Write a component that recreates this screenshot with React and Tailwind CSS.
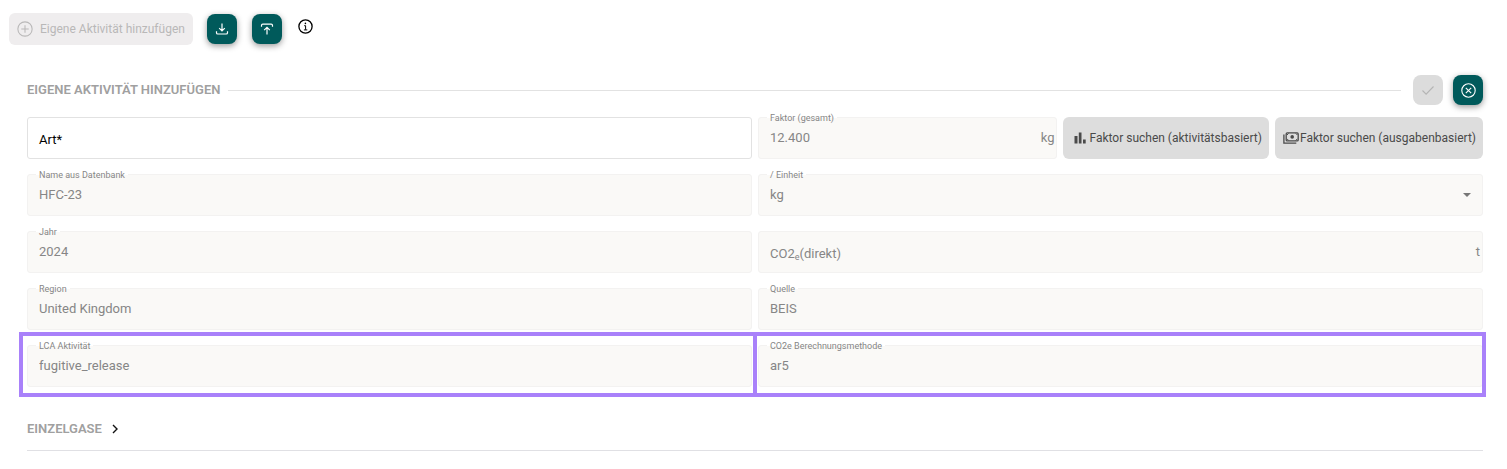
import React, { useState } from "react";

const iconButton =
  "flex h-[30px] w-[30px] shrink-0 items-center justify-center rounded-lg bg-[#005a5b] text-white shadow-[0_2px_6px_rgba(0,0,0,0.4)]";

const searchButton =
  "flex h-[42px] shrink-0 items-center rounded-md bg-[#dddddd] pr-[7px] text-[12px] text-[#4a4a4a]";

const box = "h-[42px] w-full rounded-[3px] border border-[#f3f2f1] bg-[#faf9f7] px-[11px] text-[13px] text-[#868686]";

const FloatingLabel = ({ id, children }) => (
  <label
    htmlFor={id}
    className="absolute -top-[5px] left-[9px] bg-linear-to-b from-white from-50% to-[#faf9f7] to-50% px-[3px] text-[9px] leading-3 text-[#868686]"
  >
    {children}
  </label>
);

const Field = ({ id, label, value, unit }) => (
  <div className="relative min-w-0 flex-1">
    <input id={id} className={`pb-[2px] ${box}`} defaultValue={value} disabled />
    <FloatingLabel id={id}>{label}</FloatingLabel>
    {unit && <span className="absolute inset-y-0 right-[3px] flex items-center text-[13px] text-[#868686]">{unit}</span>}
  </div>
);

const PlusIcon = () => (
  <svg width="16" height="16" viewBox="0 0 15 15" fill="none" stroke="currentColor">
    <circle cx="7.5" cy="7.5" r="6.7" />
    <path d="M7.5 4v7M4 7.5h7" />
  </svg>
);

const DownloadIcon = () => (
  <svg width="14" height="14" viewBox="0 0 14 14" fill="none" stroke="currentColor" strokeWidth="1.2">
    <path d="M7 1.5v7.3M4.2 6.2L7 9l2.8-2.8M1.5 9.3v1.4q0 1.3 1.3 1.3h8.4q1.3 0 1.3-1.3V9.3" />
  </svg>
);

const UploadIcon = () => (
  <svg width="14" height="14" viewBox="0 0 14 14" fill="none" stroke="currentColor" strokeWidth="1.2">
    <path d="M1.5 4.7V3.5q0-1.3 1.3-1.3h8.4q1.3 0 1.3 1.3v1.2M7 12.5V5.3M4.2 8.1L7 5.3l2.8 2.8" />
  </svg>
);

const InfoIcon = () => (
  <svg width="15" height="15" viewBox="0 0 15 15" fill="none" stroke="currentColor" strokeWidth="1.3">
    <circle cx="7.5" cy="7.5" r="6.6" />
    <path d="M6.2 6.7h1.4v4M5.9 10.9h3.4" strokeWidth="1" />
    <circle cx="7.4" cy="4.4" r="0.8" fill="currentColor" stroke="none" />
  </svg>
);

const CheckIcon = () => (
  <svg width="14" height="14" viewBox="0 0 14 14" fill="none" stroke="currentColor" strokeWidth="1.1">
    <path d="M1.5 7.5l3.6 3.6 7.4-7.6" />
  </svg>
);

const CloseIcon = () => (
  <svg width="15" height="15" viewBox="0 0 15 15" fill="none" stroke="currentColor" strokeWidth="1.1">
    <circle cx="7.5" cy="7.5" r="6.7" />
    <path d="M4.8 4.8l5.4 5.4M10.2 4.8l-5.4 5.4" />
  </svg>
);

const BarsIcon = () => (
  <svg width="12" height="12" viewBox="0 0 12 12" fill="currentColor">
    <path d="M0.5 4h3v7.5h-3zM4.8 0.5h2.7v11H4.8zM9 7.5h2.7v4H9z" />
  </svg>
);

const MoneyIcon = () => (
  <svg width="16" height="12" viewBox="0 0 16 12" fill="none" stroke="currentColor" strokeWidth="1.3">
    <rect x="3.2" y="0.9" width="12" height="8" rx="1" />
    <path d="M0.9 2.6v8.5h12.4" />
    <circle cx="9.2" cy="4.9" r="1.8" fill="currentColor" stroke="none" />
    <path d="M4 3l1.6-1.6M14.4 3l-1.6-1.6M4 6.8l1.6 1.6M14.4 6.8l-1.6 1.6" strokeWidth="1" />
  </svg>
);

const App = () => {
  const [type, setType] = useState("");
  const [open, setOpen] = useState(false);

  return (
    <div className="bg-white pb-[18px] font-['Roboto','Liberation_Sans',sans-serif]">
      <div className="flex items-start pl-[9px] pt-[13px]">
        <button
          disabled
          className="flex h-8 items-center gap-[7px] rounded-md bg-[#efedee] px-2 text-[12px] text-[#b9b8b8]"
        >
          <PlusIcon />
          Eigene Aktivität hinzufügen
        </button>
        <div className="ml-[14px] flex gap-[15px] pt-px">
          <button aria-label="Herunterladen" className={iconButton}>
            <DownloadIcon />
          </button>
          <button aria-label="Hochladen" className={iconButton}>
            <UploadIcon />
          </button>
        </div>
        <button aria-label="Info" className="ml-4 mt-[6px] text-black">
          <InfoIcon />
        </button>
      </div>

      <form className="pl-[27px] pr-6 pt-[30px]" onSubmit={(e) => e.preventDefault()}>
        <div className="flex items-center">
          <h2 className="text-[13px] font-semibold text-[#a0a0a0]">EIGENE AKTIVITÄT HINZUFÜGEN</h2>
          <div className="ml-2 mr-3 h-px flex-1 bg-[#e2e2e2]" />
          <button
            disabled
            aria-label="Speichern"
            className="flex h-[30px] w-[30px] items-center justify-center rounded-lg bg-[#dcdcdc] text-[#b4b4b4]"
          >
            <CheckIcon />
          </button>
          <button type="button" aria-label="Abbrechen" className={`ml-[10px] ${iconButton}`}>
            <CloseIcon />
          </button>
        </div>

        <div className="mt-3 flex flex-col gap-[15px]">
          <div className="grid grid-cols-2 gap-[6px]">
            <div className="relative">
              <input
                id="type"
                value={type}
                onChange={(e) => setType(e.target.value)}
                className="h-[42px] w-full rounded-[3px] border border-[#e2e2e2] bg-white px-[11px] text-[13px] text-black"
              />
              {!type && (
                <label htmlFor="type" className="absolute inset-y-0 left-3 flex items-center pt-[3px] text-[13px] text-black">
                  Art*
                </label>
              )}
            </div>
            <div className="flex gap-[6px]">
              <Field id="factor" label="Faktor (gesamt)" value="12.400" unit="kg" />
              <button type="button" className={`gap-[3px] pl-[11px] ${searchButton}`}>
                <BarsIcon />
                Faktor suchen (aktivitätsbasiert)
              </button>
              <button type="button" className={`gap-px pl-2 ${searchButton}`}>
                <MoneyIcon />
                Faktor suchen (ausgabenbasiert)
              </button>
            </div>
          </div>

          <div className="grid grid-cols-2 gap-[6px]">
            <Field id="name" label="Name aus Datenbank" value="HFC-23" />
            <div className="relative">
              <select id="unit" disabled defaultValue="kg" className={`appearance-none opacity-100 ${box}`}>
                <option>kg</option>
              </select>
              <FloatingLabel id="unit">/ Einheit</FloatingLabel>
              <span className="pointer-events-none absolute inset-y-0 right-3 flex items-center text-[#777777]">
                <svg width="8" height="4" viewBox="0 0 8 4" fill="currentColor">
                  <path d="M0 0h8L4 4z" />
                </svg>
              </span>
            </div>
          </div>

          <div className="grid grid-cols-2 gap-[6px]">
            <Field id="year" label="Jahr" value="2024" />
            <div className="relative">
              <input id="direct" className={box} disabled />
              <label htmlFor="direct" className="absolute inset-y-0 left-3 flex items-center pt-[3px] text-[13px] text-[#868686]">
                <span>
                  CO2<sub className="text-[9px]">e</sub>(direkt)
                </span>
              </label>
              <span className="absolute inset-y-0 right-[3px] flex items-center text-[13px] text-[#868686]">t</span>
            </div>
          </div>

          <div className="grid grid-cols-2 gap-[6px]">
            <Field id="region" label="Region" value="United Kingdom" />
            <Field id="source" label="Quelle" value="BEIS" />
          </div>

          <div className="relative grid grid-cols-2 gap-[6px]">
            <Field id="lca" label="LCA Aktivität" value="fugitive_release" />
            <Field id="method" label="CO2e Berechnungsmethode" value="ar5" />
            <div className="pointer-events-none absolute -bottom-[10px] -left-2 -right-[3px] -top-[13px] border-4 border-[#a981fa]" />
            <div className="pointer-events-none absolute -bottom-[10px] -top-[13px] left-1/2 -ml-[2px] w-1 bg-[#a981fa]" />
          </div>
        </div>

        <div className="mt-8 border-b border-[#e0e0e4] pb-[11px]">
          <button
            type="button"
            aria-expanded={open}
            onClick={() => setOpen(!open)}
            className="flex items-center gap-[10px] text-[13px] font-semibold leading-5 text-[#a0a0a0]"
          >
            EINZELGASE
            <svg width="6" height="10" viewBox="0 0 6 10" fill="none" stroke="#111111" strokeWidth="1.4">
              <path d="M1 1l4 4-4 4" />
            </svg>
          </button>
        </div>
      </form>
    </div>
  );
};

export default App;
